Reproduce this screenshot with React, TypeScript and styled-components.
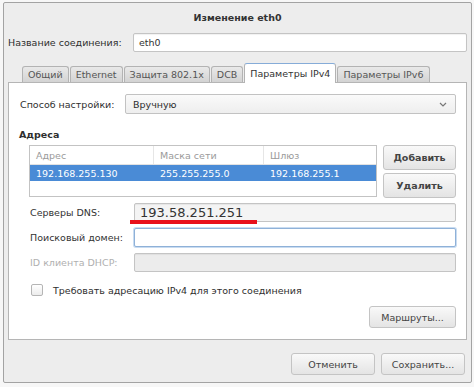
import React from "react";
import styled, { createGlobalStyle } from "styled-components";

const GlobalStyle = createGlobalStyle`
  html, body {
    margin: 0;
    padding: 0;
    background: #f7f7f7;
    font-family: "DejaVu Sans", "Liberation Sans", sans-serif;
    font-size: 9.5px;
    color: #2e2e2e;
  }
`;

const Page = styled.div`
  width: 474px;
  height: 387px;
  overflow: hidden;
  padding: 2px 2px 0 3px;
  box-sizing: border-box;
`;

const Window = styled.div`
  width: 469px;
  height: 381px;
  box-sizing: border-box;
  border: 1px solid #a3a3a3;
  border-radius: 2px;
  background: #ededed;
  display: flex;
  flex-direction: column;
  padding: 0 4px 0 4px;
`;

const Title = styled.div`
  height: 28px;
  display: flex;
  align-items: center;
  justify-content: center;
  font-weight: bold;
  font-size: 9.5px;
  color: #333;
`;

const NameRow = styled.div`
  display: flex;
  align-items: center;
  margin-top: 2px;
`;

const NameLabel = styled.span`
  width: 125px;
  flex-shrink: 0;
`;

const Field = styled.div<{ $focus?: boolean; $disabled?: boolean; $big?: boolean }>`
  flex: 1;
  height: 19px;
  box-sizing: border-box;
  border: 1px solid ${(p) => (p.$focus ? "#8fb1d8" : "#c4c4c4")};
  border-radius: 2px;
  background: ${(p) => (p.$disabled ? "#ececec" : p.$big ? "#f4f4f4" : "#fff")};
  box-shadow: ${(p) => (p.$focus ? "0 0 0 1px #c9dcf1" : "inset 0 1px 1px rgba(0,0,0,0.06)")};
  display: flex;
  align-items: center;
  padding-left: 5px;
  font-size: ${(p) => (p.$big ? "13px" : "9.5px")};
  color: #333;
  position: relative;
`;

const TabBar = styled.div`
  display: flex;
  align-items: flex-end;
  margin-top: 10px;
  padding-left: 14px;
  height: 20px;
`;

const Tab = styled.div<{ $active?: boolean }>`
  height: ${(p) => (p.$active ? "20px" : "16px")};
  box-sizing: border-box;
  padding: 0 5px;
  display: flex;
  align-items: center;
  border: 1px solid #b3b3b3;
  border-bottom: none;
  border-top-color: ${(p) => (p.$active ? "#86acd8" : "#b3b3b3")};
  border-radius: 3px 3px 0 0;
  background: ${(p) => (p.$active ? "#fff" : "linear-gradient(#e9e9e9, #d3d3d3)")};
  color: ${(p) => (p.$active ? "#333" : "#555")};
  margin-right: 1px;
  margin-bottom: ${(p) => (p.$active ? "-1px" : "0")};
  position: relative;
  z-index: ${(p) => (p.$active ? 1 : 0)};
`;

const Panel = styled.div`
  height: 258px;
  box-sizing: border-box;
  border: 1px solid #b5b5b5;
  background: #fff;
  padding: 11px 10px 0 11px;
  display: flex;
  flex-direction: column;
`;

const MethodRow = styled.div`
  display: flex;
  align-items: center;
`;

const MethodLabel = styled.span`
  width: 105px;
  flex-shrink: 0;
`;

const Combo = styled.div`
  flex: 1;
  height: 20px;
  box-sizing: border-box;
  border: 1px solid #c2c2c2;
  border-radius: 2px;
  background: linear-gradient(#fafafa, #eeeeee);
  display: flex;
  align-items: center;
  justify-content: space-between;
  padding: 0 8px 0 7px;
`;

const SectionTitle = styled.div`
  font-weight: bold;
  margin-top: 15px;
  margin-left: -1px;
`;

const AddrBlock = styled.div`
  display: flex;
  margin-top: 5px;
  padding-left: 9px;
  gap: 6px;
`;

const Table = styled.div`
  width: 348px;
  height: 52px;
  box-sizing: border-box;
  border: 1px solid #c3c3c3;
  background: #fff;
`;

const Row = styled.div<{ $head?: boolean; $selected?: boolean }>`
  display: grid;
  grid-template-columns: 124px 110px 1fr;
  height: ${(p) => (p.$head ? "18px" : "16px")};
  align-items: center;
  background: ${(p) => (p.$selected ? "#4a8bd6" : "transparent")};
  color: ${(p) => (p.$head ? "#9a9a9a" : p.$selected ? "#fff" : "#333")};
  border-bottom: ${(p) => (p.$head ? "1px solid #e2e2e2" : "none")};
`;

const Cell = styled.span<{ $sep?: boolean }>`
  padding-left: 6px;
  height: 100%;
  display: flex;
  align-items: center;
  border-right: ${(p) => (p.$sep ? "1px solid #e6e6e6" : "none")};
`;

const SideButtons = styled.div`
  display: flex;
  flex-direction: column;
  gap: 3px;
`;

const Button = styled.div<{ $w: number; $h?: number; $bold?: boolean }>`
  width: ${(p) => p.$w}px;
  height: ${(p) => p.$h ?? 25}px;
  box-sizing: border-box;
  border: 1px solid #c4c4c4;
  border-radius: 3px;
  background: linear-gradient(#f9f9f9, #e4e4e4);
  display: flex;
  align-items: center;
  justify-content: center;
  font-weight: ${(p) => (p.$bold ? "bold" : "normal")};
  color: #444;
`;

const FormGrid = styled.div`
  display: grid;
  grid-template-columns: 104px 1fr;
  row-gap: 6px;
  align-items: center;
  padding-left: 10px;
  margin-top: 5px;
`;

const FormLabel = styled.span<{ $disabled?: boolean }>`
  color: ${(p) => (p.$disabled ? "#b0b0b0" : "#333")};
`;

const RedLine = styled.div`
  position: absolute;
  left: -5px;
  bottom: -3px;
  width: 127px;
  height: 4px;
  background: #e8101a;
`;

const CheckRow = styled.div`
  display: flex;
  align-items: center;
  gap: 10px;
  margin-top: 12px;
  padding-left: 11px;
`;

const CheckBox = styled.div`
  width: 10px;
  height: 10px;
  border: 1px solid #b5b5b5;
  border-radius: 2px;
  background: linear-gradient(#fff, #ececec);
`;

const RoutesRow = styled.div`
  display: flex;
  justify-content: flex-end;
  margin-top: 10px;
`;

const Footer = styled.div`
  display: flex;
  justify-content: flex-end;
  gap: 6px;
  margin-top: 13px;
  padding-right: 2px;
`;

export default function App() {
  return (
    <Page>
      <GlobalStyle />
      <Window>
        <Title>Изменение eth0</Title>
        <NameRow>
          <NameLabel>Название соединения:</NameLabel>
          <Field>eth0</Field>
        </NameRow>
        <TabBar>
          <Tab>Общий</Tab>
          <Tab>Ethernet</Tab>
          <Tab>Защита 802.1x</Tab>
          <Tab>DCB</Tab>
          <Tab $active>Параметры IPv4</Tab>
          <Tab>Параметры IPv6</Tab>
        </TabBar>
        <Panel>
          <MethodRow>
            <MethodLabel>Способ настройки:</MethodLabel>
            <Combo>
              <span>Вручную</span>
              <svg width="8" height="5" viewBox="0 0 8 5">
                <path d="M1 1l3 3 3-3" fill="none" stroke="#777" strokeWidth="1.2" />
              </svg>
            </Combo>
          </MethodRow>
          <SectionTitle>Адреса</SectionTitle>
          <AddrBlock>
            <Table>
              <Row $head>
                <Cell $sep>Адрес</Cell>
                <Cell $sep>Маска сети</Cell>
                <Cell>Шлюз</Cell>
              </Row>
              <Row $selected>
                <Cell>192.168.255.130</Cell>
                <Cell>255.255.255.0</Cell>
                <Cell>192.168.255.1</Cell>
              </Row>
            </Table>
            <SideButtons>
              <Button $w={73} $bold>Добавить</Button>
              <Button $w={73} $bold>Удалить</Button>
            </SideButtons>
          </AddrBlock>
          <FormGrid>
            <FormLabel>Серверы DNS:</FormLabel>
            <Field $big>
              193.58.251.251
              <RedLine />
            </Field>
            <FormLabel>Поисковый домен:</FormLabel>
            <Field $focus />
            <FormLabel $disabled>ID клиента DHCP:</FormLabel>
            <Field $disabled />
          </FormGrid>
          <CheckRow>
            <CheckBox />
            <span>Требовать адресацию IPv4 для этого соединения</span>
          </CheckRow>
          <RoutesRow>
            <Button $w={87} $h={22}>Маршруты...</Button>
          </RoutesRow>
        </Panel>
        <Footer>
          <Button $w={84} $h={22}>Отменить</Button>
          <Button $w={84} $h={22}>Сохранить...</Button>
        </Footer>
      </Window>
    </Page>
  );
}
